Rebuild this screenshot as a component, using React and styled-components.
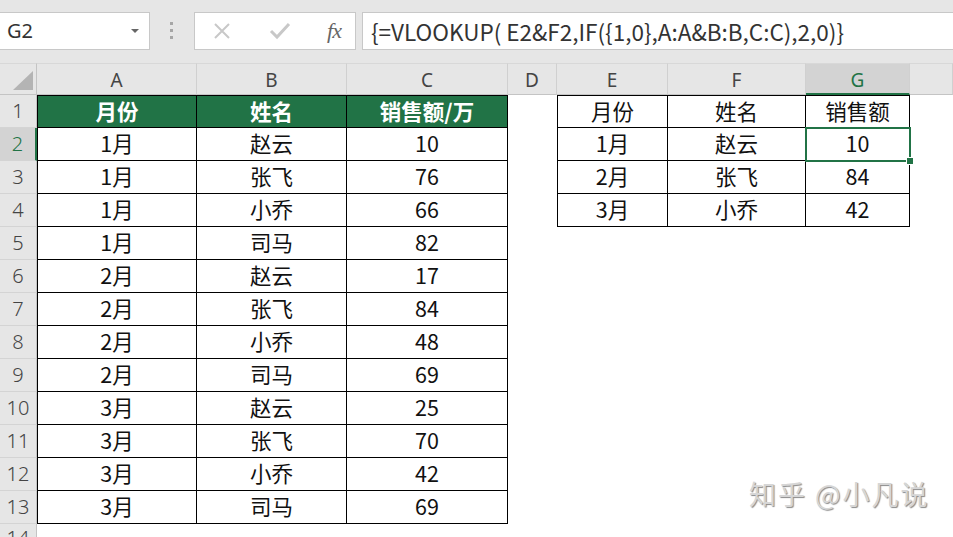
import styled, { createGlobalStyle } from "styled-components";

const GlobalStyle = createGlobalStyle`
  html, body {
    margin: 0;
    padding: 0;
    background: #fff;
  }
  body {
    font-family: "Noto Sans CJK SC", "Noto Sans", sans-serif;
    width: 953px;
    height: 537px;
    overflow: hidden;
  }
`;

const Page = styled.div`
  position: relative;
  width: 953px;
  height: 537px;
  overflow: hidden;
  background: #fff;
`;

const Toolbar = styled.div`
  display: flex;
  align-items: center;
  height: 63px;
  background: #e6e6e6;
  box-sizing: border-box;
  padding-bottom: 2px;
`;

const NameBox = styled.div`
  display: flex;
  align-items: center;
  justify-content: space-between;
  width: 150px;
  height: 38px;
  box-sizing: border-box;
  background: #fff;
  border: 1px solid #c8c8c8;
  border-left: none;
  padding: 0 10px 0 7px;
  font-family: "Noto Sans", sans-serif;
  font-size: 20px;
  color: #333;
`;

const Caret = styled.span`
  width: 0;
  height: 0;
  border-left: 4px solid transparent;
  border-right: 4px solid transparent;
  border-top: 4px solid #666;
`;

const Grip = styled.div`
  display: flex;
  flex-direction: column;
  gap: 4px;
  margin: 0 21px 0 20px;
  span {
    width: 3px;
    height: 3px;
    background: #a6a6a6;
  }
`;

const ButtonsBox = styled.div`
  display: flex;
  align-items: center;
  width: 162px;
  height: 38px;
  box-sizing: border-box;
  background: #fff;
  border: 1px solid #c8c8c8;
  padding: 0 14px 0 17px;
  justify-content: space-between;
`;

const Fx = styled.span`
  font-family: "Liberation Serif", serif;
  font-style: italic;
  font-size: 22px;
  color: #666;
  letter-spacing: -1px;
`;

const FormulaBox = styled.div`
  flex: 1;
  display: flex;
  align-items: center;
  height: 38px;
  margin-left: 6px;
  box-sizing: border-box;
  background: #fff;
  border: 1px solid #c8c8c8;
  border-right: none;
  padding-left: 8px;
  font-family: "Noto Sans CJK SC", sans-serif;
  font-size: 22.5px;
  color: #333;
  white-space: nowrap;
`;

const Sheet = styled.div`
  position: relative;
  display: grid;
  grid-template-columns: 37px 160px 150px 161px 49px 111px 138px 104px 1fr;
  grid-template-rows: 32px repeat(13, 33px) 1fr;
  height: 474px;
`;

const Corner = styled.div`
  position: relative;
  background: #e6e6e6;
  border-right: 1px solid #c4c4c4;
  border-bottom: 1px solid #c4c4c4;
  border-top: 1px solid #d8d8d8;
  box-sizing: border-box;
  &::after {
    content: "";
    position: absolute;
    right: 3px;
    bottom: 4px;
    border-left: 20px solid transparent;
    border-bottom: 19px solid #b4b4b4;
  }
`;

const ColHead = styled.div`
  display: flex;
  align-items: center;
  justify-content: center;
  box-sizing: border-box;
  background: ${(p) => (p.$active ? "#d3d3d3" : "#e6e6e6")};
  color: ${(p) => (p.$active ? "#217346" : "#444")};
  border-top: 1px solid #d8d8d8;
  border-right: 1px solid #d0d0d0;
  border-bottom: ${(p) => (p.$active ? "2px solid #217346" : "1px solid #c4c4c4")};
  font-family: "Noto Sans", sans-serif;
  font-size: 19px;
  padding-top: 2px;
`;

const RowHead = styled.div`
  display: flex;
  align-items: center;
  justify-content: center;
  box-sizing: border-box;
  background: ${(p) => (p.$active ? "#d3d3d3" : "#e6e6e6")};
  color: ${(p) => (p.$active ? "#217346" : "#444")};
  border-right: ${(p) => (p.$active ? "2px solid #217346" : "1px solid #c4c4c4")};
  border-bottom: 1px solid #d4d4d4;
  font-family: "Noto Sans", sans-serif;
  font-size: 20px;
  font-weight: 300;
  padding-bottom: 1px;
`;

const Cell = styled.div`
  display: flex;
  align-items: center;
  justify-content: center;
  box-sizing: border-box;
  background: ${(p) => (p.$head ? "#217346" : "#fff")};
  color: ${(p) => (p.$head ? "#fff" : "#111")};
  font-weight: ${(p) => (p.$head ? 700 : 400)};
  font-size: 21.5px;
  line-height: 1;
  padding-bottom: 2px;
  border-right: ${(p) => (p.$boxed ? "1px solid #000" : "none")};
  border-bottom: ${(p) => (p.$boxed ? "1px solid #000" : "none")};
  border-top: ${(p) => (p.$top ? "1px solid #000" : "none")};
  border-left: ${(p) => (p.$left ? "1px solid #000" : "none")};
`;

const Selection = styled.div`
  position: absolute;
  left: 805px;
  top: 64px;
  width: 106px;
  height: 35px;
  box-sizing: border-box;
  border: 2px solid #217346;
  pointer-events: none;
  &::after {
    content: "";
    position: absolute;
    right: -5px;
    bottom: -5px;
    width: 6px;
    height: 6px;
    background: #217346;
    border: 1px solid #fff;
  }
`;

const Watermark = styled.div`
  position: absolute;
  left: 749px;
  top: 474px;
  font-family: "Noto Sans CJK SC", sans-serif;
  font-size: 27px;
  color: #d6d6d6;
  text-shadow: 1px 1px 1px #8a8a8a;
  letter-spacing: 2px;
`;

const cols = ["A", "B", "C", "D", "E", "F", "G"];
const names = ["赵云", "张飞", "小乔", "司马"];
const sales = [10, 76, 66, 82, 17, 84, 48, 69, 25, 70, 42, 69];

const left = [["月份", "姓名", "销售额/万"]].concat(
  sales.map((v, i) => [`${Math.floor(i / 4) + 1}月`, names[i % 4], String(v)])
);

const right = [
  ["月份", "姓名", "销售额"],
  ["1月", "赵云", "10"],
  ["2月", "张飞", "84"],
  ["3月", "小乔", "42"],
];

function CancelIcon() {
  return (
    <svg width="20" height="20" viewBox="0 0 20 20">
      <path d="M3 3L17 17M17 3L3 17" stroke="#c8c8c8" strokeWidth="2" fill="none" />
    </svg>
  );
}

function CheckIcon() {
  return (
    <svg width="22" height="20" viewBox="0 0 22 20">
      <path d="M2 10L8 16L20 3" stroke="#c8c8c8" strokeWidth="3" fill="none" />
    </svg>
  );
}

export default function App() {
  const rows = [];
  for (let r = 0; r < 14; r++) {
    const cells = [];
    cells.push(
      <RowHead key="h" $active={r === 1}>
        {r + 1}
      </RowHead>
    );
    for (let c = 0; c < 3; c++) {
      const row = left[r];
      cells.push(
        <Cell key={`l${c}`} $boxed={!!row} $head={r === 0} $top={r === 0} $left={c === 0 && !!row}>
          {row ? row[c] : ""}
        </Cell>
      );
    }
    cells.push(<Cell key="d" />);
    for (let c = 0; c < 3; c++) {
      const row = right[r];
      cells.push(
        <Cell key={`r${c}`} $boxed={!!row} $top={r === 0} $left={c === 0 && !!row}>
          {row ? row[c] : ""}
        </Cell>
      );
    }
    cells.push(<Cell key="rest" />);
    rows.push(cells);
  }

  return (
    <Page>
      <GlobalStyle />
      <Toolbar>
        <NameBox>
          G2
          <Caret />
        </NameBox>
        <Grip>
          <span />
          <span />
          <span />
        </Grip>
        <ButtonsBox>
          <CancelIcon />
          <CheckIcon />
          <Fx>fx</Fx>
        </ButtonsBox>
        <FormulaBox>{"{=VLOOKUP( E2&F2,IF({1,0},A:A&B:B,C:C),2,0)}"}</FormulaBox>
      </Toolbar>
      <Sheet>
        <Corner />
        {cols.map((c) => (
          <ColHead key={c} $active={c === "G"}>
            {c}
          </ColHead>
        ))}
        <ColHead />
        {rows}
        <RowHead />
        <Selection />
      </Sheet>
      <Watermark>知乎 @小凡说</Watermark>
    </Page>
  );
}
